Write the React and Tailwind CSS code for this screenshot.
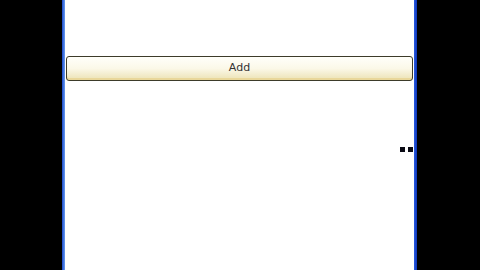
import React from 'react';

const App = () => {
  return (
    <div className="w-[480px] h-[270px] bg-black flex overflow-hidden" style={{ fontFamily: '"DejaVu Sans", "Liberation Sans", sans-serif' }}>
      <div className="ml-[62px] w-[355px] h-full flex bg-white">
        {/* left frame edge */}
        <div className="w-[3px] h-full bg-gradient-to-r from-[#1c47c9] to-[#6c9cf0]" />
        <div className="flex-1 h-full flex flex-col relative">
          <div className="pt-[56px] pl-[1px] pr-[1px]">
            <button className="w-full h-[25px] rounded-[3px] border border-[#3d3b2a] bg-gradient-to-b from-[#fffffa] via-[#fbf8e8] to-[#ece2b4] shadow-[inset_0_-2px_0_#e9d79a] text-[11px] text-[#333] flex items-center justify-center">
              Add
            </button>
          </div>
          {/* resize grip dots */}
          <div className="absolute right-[1px] top-[147px] flex gap-[3px]">
            <div className="w-[5px] h-[5px] bg-[#0a0a14]" />
            <div className="w-[5px] h-[5px] bg-[#0a0a14]" />
          </div>
        </div>
        {/* right frame edge */}
        <div className="w-[3px] h-full bg-gradient-to-r from-[#2a5be0] to-[#0e35b8]" />
      </div>
    </div>
  );
};

export default App;
